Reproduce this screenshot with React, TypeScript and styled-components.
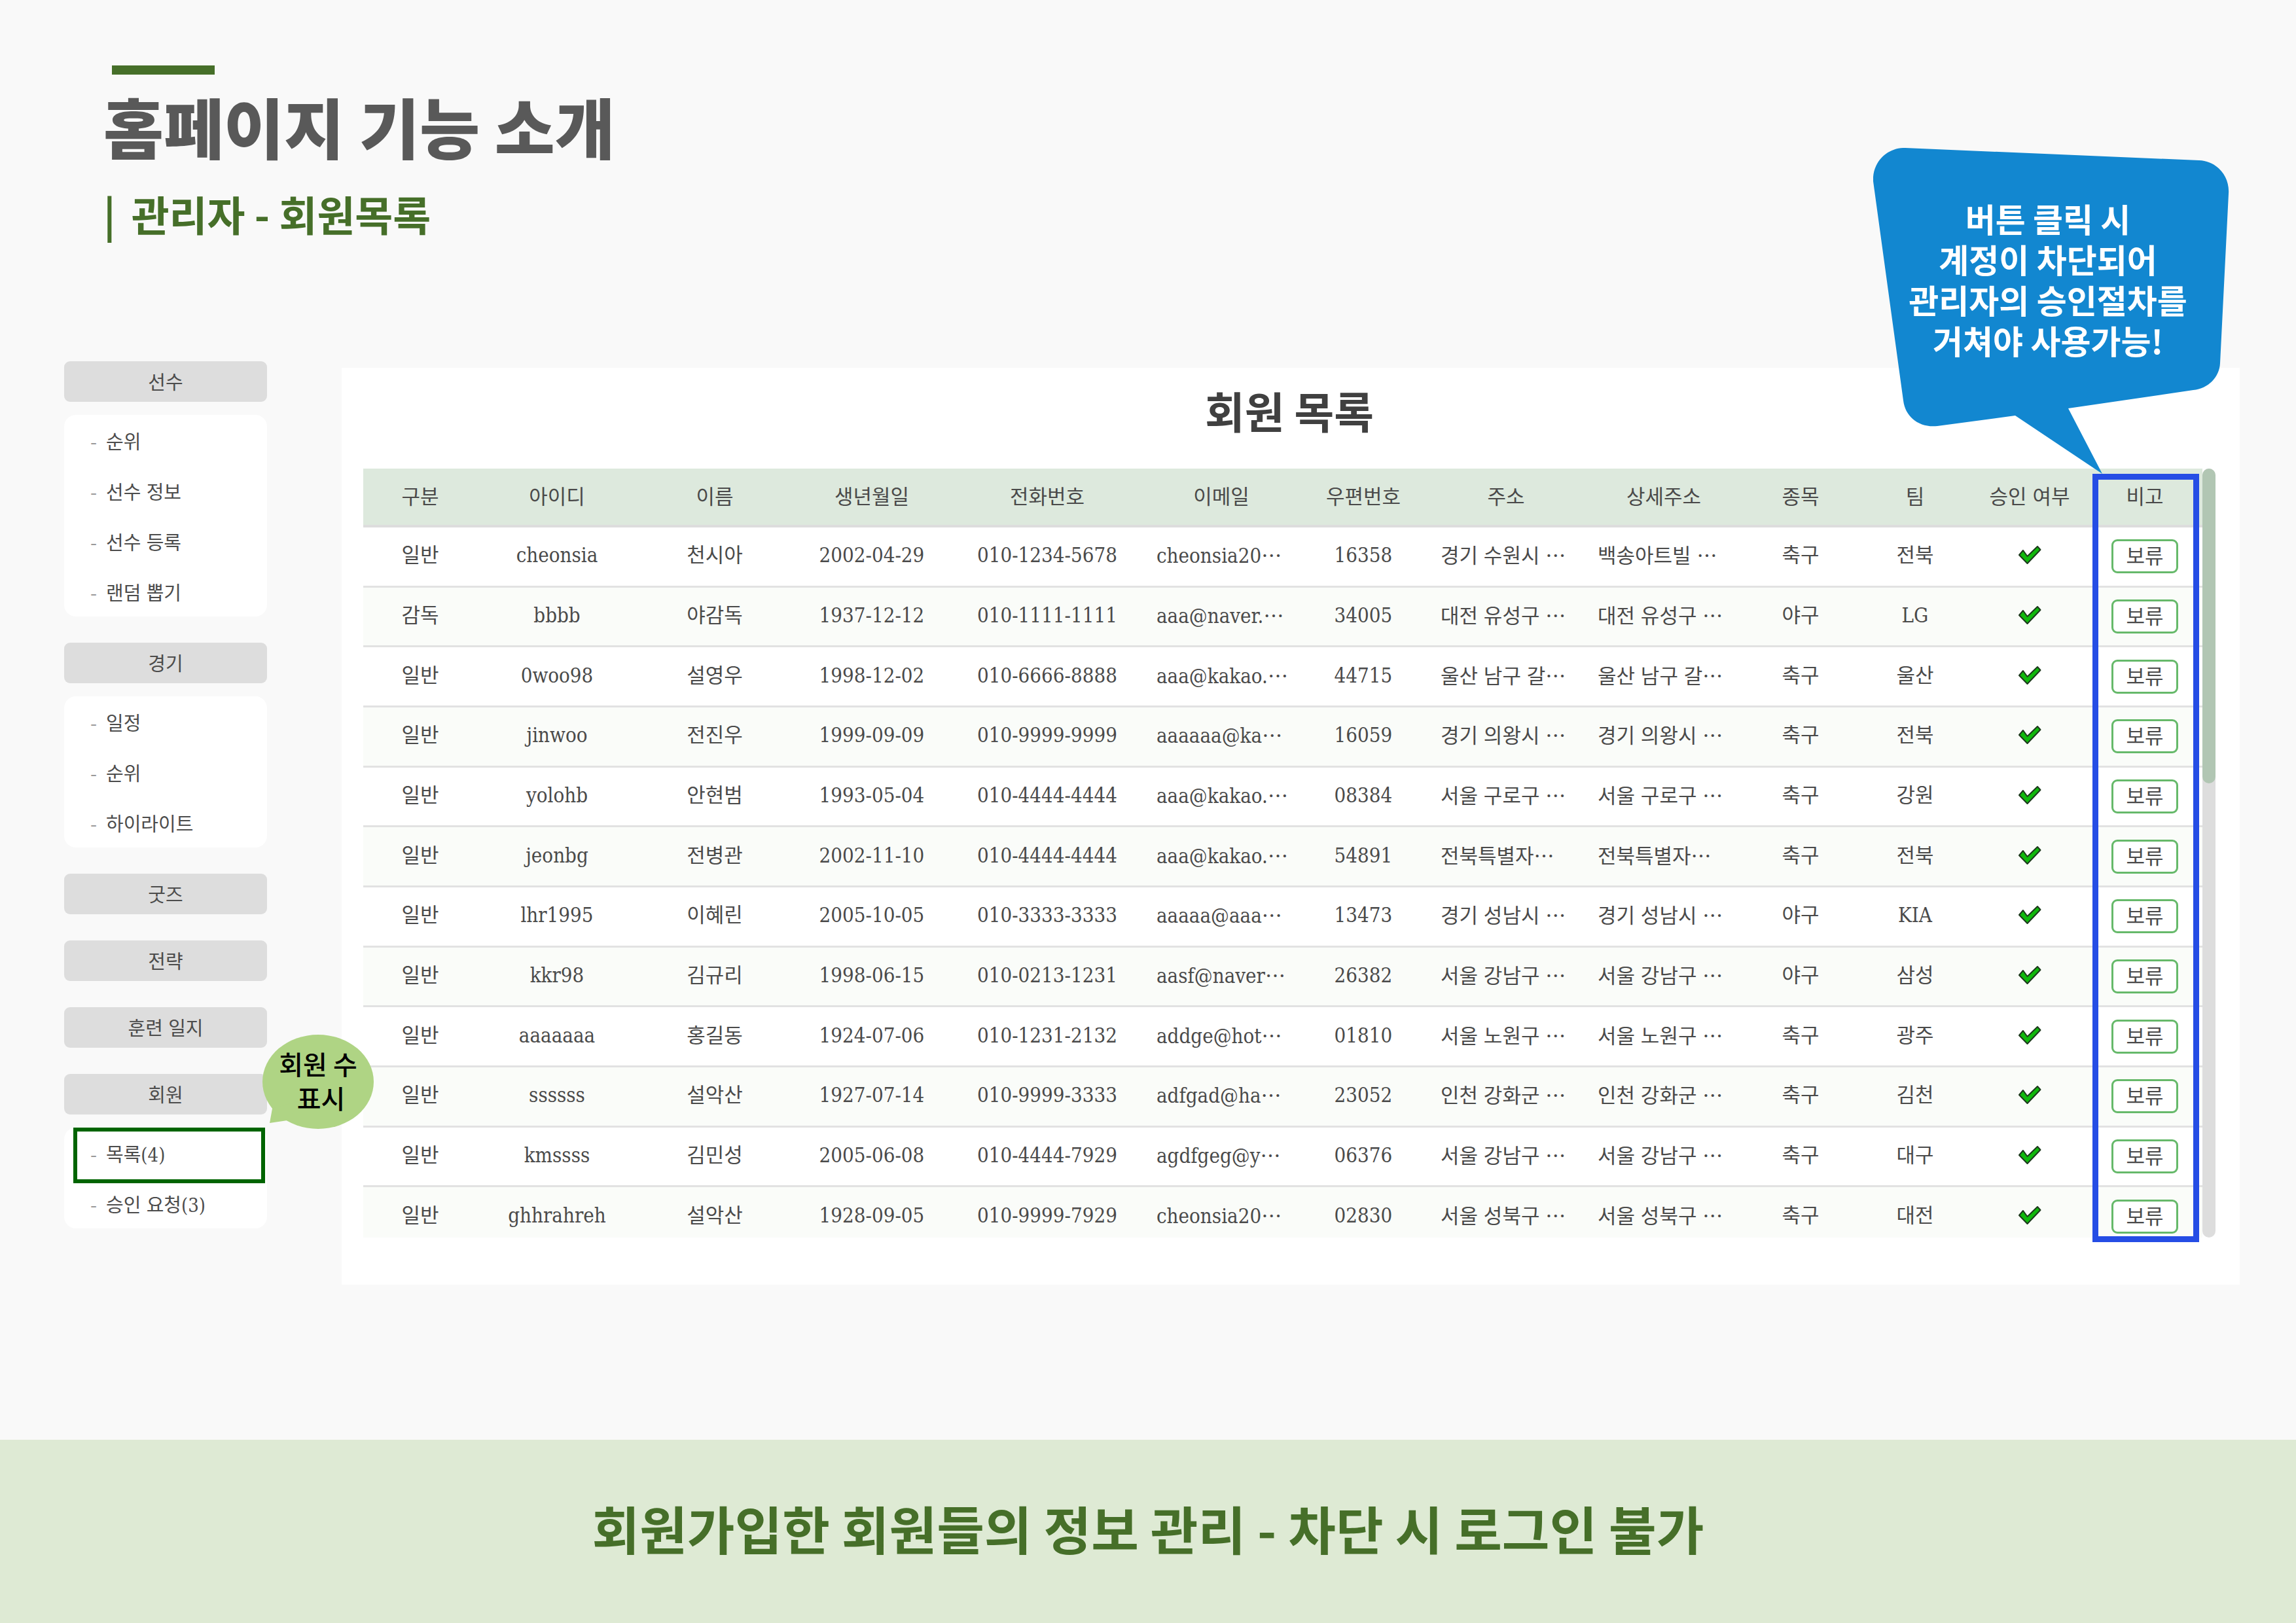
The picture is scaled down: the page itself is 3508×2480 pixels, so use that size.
import React from "react";
import styled, { createGlobalStyle } from "styled-components";

const sans = '"Noto Sans CJK KR", "Noto Sans", sans-serif';
const mixed = '"DejaVu Serif Condensed", "Noto Sans CJK KR", serif';

const GlobalStyle = createGlobalStyle`
  *, *::before, *::after { box-sizing: border-box; }
  body { margin: 0; background: #f9f9f9; }
  h1, h2, p, ul { margin: 0; padding: 0; }
  ul { list-style: none; }
  button { font: inherit; color: inherit; cursor: pointer; }
  a { color: inherit; text-decoration: none; }
`;

const Page = styled.div`
  min-height: 100vh;
  display: flex;
  flex-direction: column;
  background: #f9f9f9;
  font-family: ${sans};
  word-break: keep-all;
`;

const PageHeader = styled.header`
  padding: 100px 160px 0 158px;
`;

const Accent = styled.div`
  width: 157px;
  height: 14px;
  margin-left: 13px;
  background: #466f29;
`;

const Title = styled.h1`
  margin-top: 18px;
  font-size: 100px;
  line-height: 120px;
  font-weight: 900;
  color: #595959;
`;

const Subtitle = styled.p`
  display: flex;
  gap: 24px;
  margin-top: 34px;
  font-size: 63px;
  line-height: 80px;
  font-weight: 700;
  color: #466f29;
`;

const Main = styled.main`
  display: flex;
  align-items: flex-start;
  gap: 114px;
  margin-top: 186px;
  padding: 0 86px 0 98px;
`;

const Sidebar = styled.nav`
  flex: 0 0 310px;
  display: flex;
  flex-direction: column;
  gap: 40px;
  font-family: ${mixed};
  font-size: 29px;
  color: #4c4c4c;
`;

const Group = styled.section`
  position: relative;
  display: flex;
  flex-direction: column;
  gap: 20px;
`;

const GroupButton = styled.button`
  height: 62px;
  padding: 0 0 2px;
  border: 0;
  border-radius: 9px;
  background: #ddd;
`;

const Menu = styled.ul`
  border-radius: 18px;
  background: #fff;
`;

const MenuItem = styled.li`
  position: relative;
  height: 77px;
`;

const MenuLink = styled.a`
  display: flex;
  align-items: center;
  height: 100%;
  padding-left: 40px;
`;

const Dash = styled.span`
  width: 24px;
  font-family: ${sans};
  color: #999;
`;

const ItemFrame = styled.div`
  position: absolute;
  inset: 0 3px -8px 14px;
  border: 6px solid #006400;
  pointer-events: none;
`;

const CountNote = styled.aside`
  position: absolute;
  z-index: 2;
  left: 303px;
  top: -60px;
  width: 170px;
  height: 144px;
  display: flex;
  flex-direction: column;
  align-items: center;
  justify-content: center;
  padding-bottom: 4px;
  font-family: ${sans};
  font-size: 40px;
  line-height: 52px;
  font-weight: 500;
  white-space: pre;
  color: #000;
`;

const NoteShape = styled.svg`
  position: absolute;
  inset: 0;
  width: 100%;
  height: 100%;
  z-index: -1;
`;

const Panel = styled.section`
  position: relative;
  flex: 1;
  min-width: 0;
  margin-top: 10px;
  padding: 20px 37px 72px 33px;
  background: #fff;
  color: #4a4a4a;
`;

const PanelTitle = styled.h2`
  margin-bottom: 46px;
  text-align: center;
  font-size: 66px;
  line-height: 88px;
  font-weight: 700;
  color: #404040;
`;

const TableArea = styled.div`
  position: relative;
  display: flex;
  height: 1175px;
`;

const Scroller = styled.div`
  flex: 1;
  min-width: 0;
  overflow: hidden;
`;

const Track = styled.div`
  width: 20px;
  border-radius: 10px;
  background: #ddd;
`;

const Thumb = styled.div`
  height: 481px;
  border-radius: 10px;
  background: #b1c6b3;
`;

const Table = styled.table`
  width: 100%;
  height: 1190px;
  table-layout: fixed;
  border-collapse: separate;
  border-spacing: 0;
  font-family: ${mixed};
  font-size: 31px;
  line-height: 44px;
  white-space: nowrap;
`;

const HeadCell = styled.th`
  height: 90px;
  padding: 0;
  font-weight: 400;
  background: #dde9dd;
  border-bottom: 4px solid #ddd;
`;

const Row = styled.tr`
  &:nth-child(even) { background: #fafcf9; }
`;

const Cell = styled.td<{ $clip?: boolean }>`
  padding: 0 0 4px ${(p) => (p.$clip ? "20px" : "0")};
  text-align: ${(p) => (p.$clip ? "left" : "center")};
  border-bottom: 3px solid #e2e2e2;

  &:last-child { padding-bottom: 0; }
`;

const Ellipsis = styled.span`
  display: inline-block;
  font-family: "Noto Sans CJK SC", sans-serif;
`;

const HoldButton = styled.button`
  display: block;
  width: 102px;
  height: 52px;
  margin: 0 auto;
  padding: 0;
  border: 3px solid #66b96a;
  border-radius: 9px;
  background: #fff;
  line-height: 44px;
`;

const Tick = styled.svg`
  display: block;
  width: 36px;
  height: 30px;
  margin: 0 auto;
`;

const ColumnFrame = styled.div`
  position: absolute;
  top: 8px;
  right: 25px;
  bottom: -7px;
  width: 163px;
  border: 9px solid #254de5;
  pointer-events: none;
`;

const Callout = styled.aside`
  position: absolute;
  z-index: 2;
  top: -336px;
  right: 16px;
  width: 544px;
  height: 498px;
  padding: 76px 10px 0 0;
  text-align: center;
  font-size: 50px;
  line-height: 62px;
  font-weight: 700;
  color: #fff;
`;

const Footer = styled.footer`
  display: flex;
  align-items: center;
  justify-content: center;
  height: 280px;
  margin-top: auto;
  padding-bottom: 10px;
  background: #deead4;
  color: #466f29;
  font-size: 79px;
  line-height: 100px;
  font-weight: 700;
`;

type MenuGroup = { name: string; items: string[] };

const groups: MenuGroup[] = [
  { name: "선수", items: ["순위", "선수 정보", "선수 등록", "랜덤 뽑기"] },
  { name: "경기", items: ["일정", "순위", "하이라이트"] },
  { name: "굿즈", items: [] },
  { name: "전략", items: [] },
  { name: "훈련 일지", items: [] },
  { name: "회원", items: ["목록(4)", "승인 요청(3)"] },
];

const columns: [string, number][] = [
  ["구분", 174], ["아이디", 244], ["이름", 238], ["생년월일", 242],
  ["전화번호", 294], ["이메일", 238], ["우편번호", 196], ["주소", 240],
  ["상세주소", 242], ["종목", 176], ["팀", 174], ["승인 여부", 176], ["비고", 176],
];

const clipped = [5, 7, 8];

const members: string[][] = [
  ["일반", "cheonsia", "천시아", "2002-04-29", "010-1234-5678", "cheonsia20", "16358", "경기 수원시 ", "백송아트빌 ", "축구", "전북"],
  ["감독", "bbbb", "야감독", "1937-12-12", "010-1111-1111", "aaa@naver.", "34005", "대전 유성구 ", "대전 유성구 ", "야구", "LG"],
  ["일반", "0woo98", "설영우", "1998-12-02", "010-6666-8888", "aaa@kakao.", "44715", "울산 남구 갈", "울산 남구 갈", "축구", "울산"],
  ["일반", "jinwoo", "전진우", "1999-09-09", "010-9999-9999", "aaaaaa@ka", "16059", "경기 의왕시 ", "경기 의왕시 ", "축구", "전북"],
  ["일반", "yolohb", "안현범", "1993-05-04", "010-4444-4444", "aaa@kakao.", "08384", "서울 구로구 ", "서울 구로구 ", "축구", "강원"],
  ["일반", "jeonbg", "전병관", "2002-11-10", "010-4444-4444", "aaa@kakao.", "54891", "전북특별자", "전북특별자", "축구", "전북"],
  ["일반", "lhr1995", "이혜린", "2005-10-05", "010-3333-3333", "aaaaa@aaa", "13473", "경기 성남시 ", "경기 성남시 ", "야구", "KIA"],
  ["일반", "kkr98", "김규리", "1998-06-15", "010-0213-1231", "aasf@naver", "26382", "서울 강남구 ", "서울 강남구 ", "야구", "삼성"],
  ["일반", "aaaaaaa", "홍길동", "1924-07-06", "010-1231-2132", "addge@hot", "01810", "서울 노원구 ", "서울 노원구 ", "축구", "광주"],
  ["일반", "ssssss", "설악산", "1927-07-14", "010-9999-3333", "adfgad@ha", "23052", "인천 강화군 ", "인천 강화군 ", "축구", "김천"],
  ["일반", "kmssss", "김민성", "2005-06-08", "010-4444-7929", "agdfgeg@y", "06376", "서울 강남구 ", "서울 강남구 ", "축구", "대구"],
  ["일반", "ghhrahreh", "설악산", "1928-09-05", "010-9999-7929", "cheonsia20", "02830", "서울 성북구 ", "서울 성북구 ", "축구", "대전"],
];

const SideMenu = () => (
  <Sidebar>
    {groups.map((group) => (
      <Group key={group.name}>
        <GroupButton type="button">{group.name}</GroupButton>
        {group.items.length > 0 && (
          <Menu>
            {group.items.map((item) => (
              <MenuItem key={item}>
                <MenuLink href="#">
                  <Dash>-</Dash>
                  {item}
                </MenuLink>
                {item.startsWith("목록") && <ItemFrame />}
              </MenuItem>
            ))}
          </Menu>
        )}
        {group.name === "회원" && (
          <CountNote>
            <NoteShape viewBox="0 0 170 144">
              <ellipse cx="85" cy="72" rx="85" ry="72" fill="#afd484" />
              <path d="M15 113 L11 135 L38 131 L60 100 Z" fill="#afd484" />
            </NoteShape>
            <p>회원 수</p>
            <p>{" 표시"}</p>
          </CountNote>
        )}
      </Group>
    ))}
  </Sidebar>
);

const MemberRow = ({ values }: { values: string[] }) => (
  <Row>
    {values.map((value, i) => (
      <Cell key={i} $clip={clipped.includes(i)}>
        {value}
        {clipped.includes(i) && <Ellipsis lang="zh-CN">…</Ellipsis>}
      </Cell>
    ))}
    <Cell>
      <Tick viewBox="0 0 36 30" role="img" aria-label="승인">
        <path
          d="M2 15 L8 8 L14.500 17 L30 2 L34.500 7 L14.500 28 Z"
          fill="#10b80c"
          stroke="#1c3a1c"
          strokeWidth="2"
          strokeLinejoin="round"
        />
      </Tick>
    </Cell>
    <Cell>
      <HoldButton type="button">보류</HoldButton>
    </Cell>
  </Row>
);

export default function App() {
  return (
    <Page>
      <GlobalStyle />
      <PageHeader>
        <Accent />
        <Title>홈페이지 기능 소개</Title>
        <Subtitle>
          <span>|</span>
          <span>관리자 - 회원목록</span>
        </Subtitle>
      </PageHeader>
      <Main>
        <SideMenu />
        <Panel>
          <PanelTitle>회원 목록</PanelTitle>
          <TableArea>
            <Scroller>
              <Table>
                <colgroup>
                  {columns.map(([name, width]) => (
                    <col key={name} style={{ width: `${(width / 2810) * 100}%` }} />
                  ))}
                </colgroup>
                <thead>
                  <tr>
                    {columns.map(([name]) => (
                      <HeadCell key={name} scope="col">{name}</HeadCell>
                    ))}
                  </tr>
                </thead>
                <tbody>
                  {members.map((values) => (
                    <MemberRow key={values[1]} values={values} />
                  ))}
                </tbody>
              </Table>
            </Scroller>
            <Track>
              <Thumb />
            </Track>
            <ColumnFrame />
          </TableArea>
          <Callout>
            <NoteShape viewBox="0 0 544 498">
              <path
                d="M49 0 L498 19 C525 20 545 43 543 70 L530 329 C529 350 512 368 489 370 L298 398 L350 498 L217 409 L98 425 C70 428 49 411 46 386 L0 51 C-2 24 20 -1 49 0 Z"
                fill="#1287d0"
              />
            </NoteShape>
            <p>
              버튼 클릭 시
              <br />
              계정이 차단되어
              <br />
              관리자의 승인절차를
              <br />
              거쳐야 사용가능!
            </p>
          </Callout>
        </Panel>
      </Main>
      <Footer>
        <p>회원가입한 회원들의 정보 관리 - 차단 시 로그인 불가</p>
      </Footer>
    </Page>
  );
}
